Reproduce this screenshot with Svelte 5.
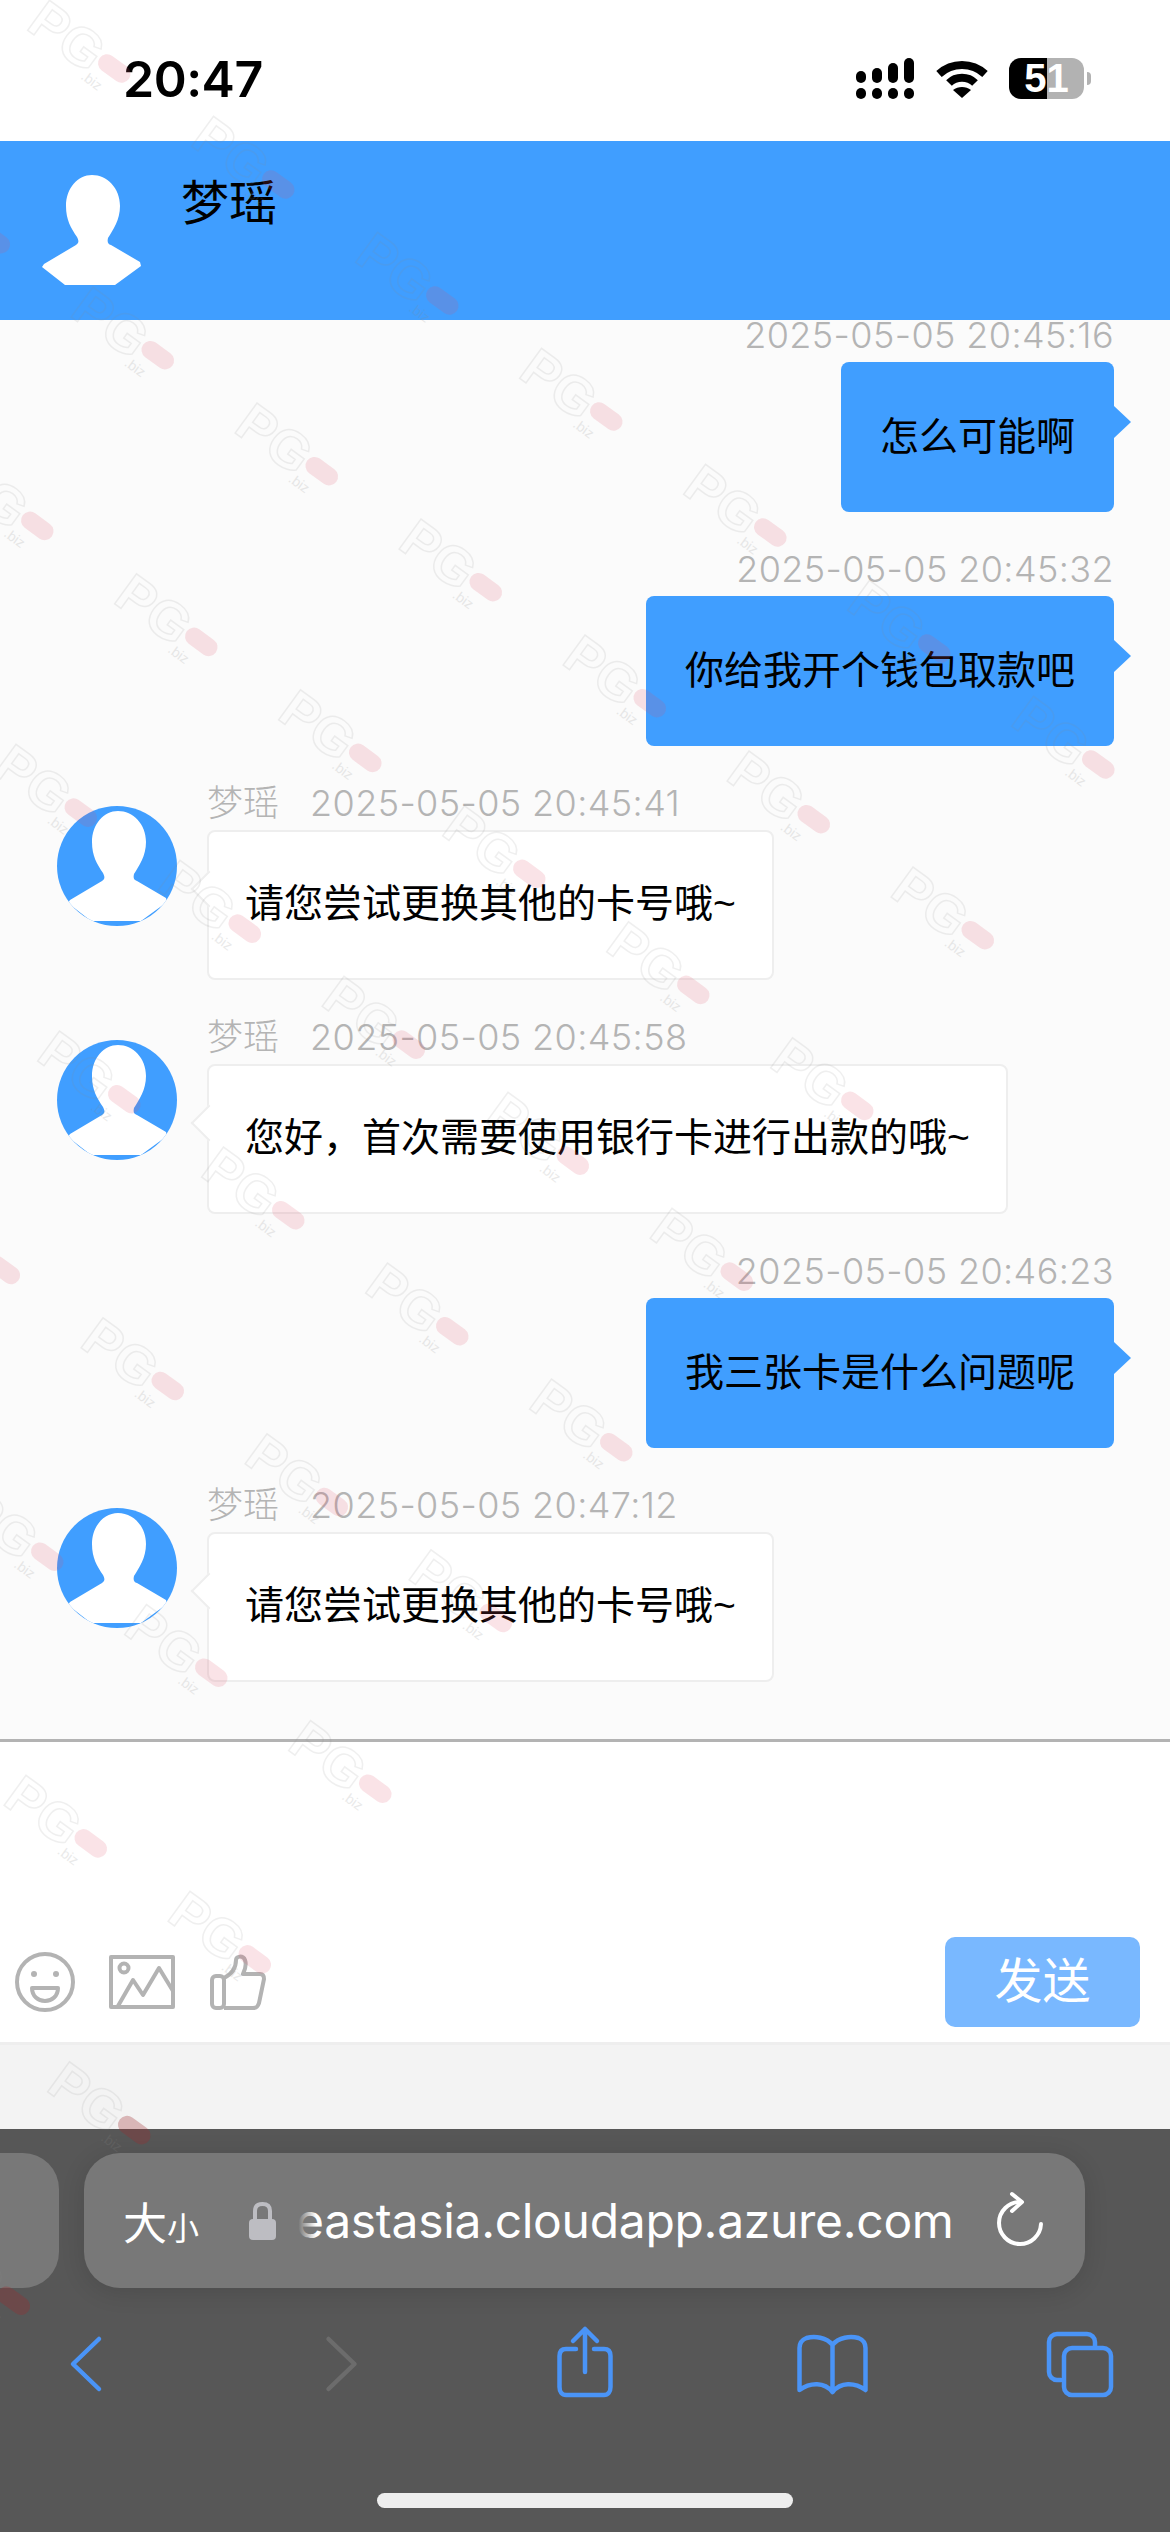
<script>
  const messages = [
    { mine: true, time: '2025-05-05 20:45:16', text: '怎么可能啊' },
    { mine: true, time: '2025-05-05 20:45:32', text: '你给我开个钱包取款吧' },
    { mine: false, time: '2025-05-05 20:45:41', text: '请您尝试更换其他的卡号哦~' },
    { mine: false, time: '2025-05-05 20:45:58', text: '您好，首次需要使用银行卡进行出款的哦~' },
    { mine: true, time: '2025-05-05 20:46:23', text: '我三张卡是什么问题呢' },
    { mine: false, time: '2025-05-05 20:47:12', text: '请您尝试更换其他的卡号哦~' }
  ];

  const figure =
    'M61 5C76 5 89 18 89 36C89 50 82 60 77 68C76 72 77 74 80 75L109 92L110 96L84 115H34L11 97L13 94L45 75C48 73 48 71 46 67C40 58 35 50 35 36C35 18 47 5 61 5Z';

  const signal = [
    { x: 856, y: 70 },
    { x: 872, y: 67 },
    { x: 888, y: 62 },
    { x: 904, y: 57 }
  ];

  //watermark sits on a regular lattice, cut off on its upper right side
  const marks = [];
  for (let n = -12; n <= 6; n++) {
    for (let m = 0; m <= 9; m++) {
      const x = 80 + n * 164 + m * -120.5;
      const y = 51 + n * 116 + m * 170.7;
      if (x > -70 && x < 1240 && y > -60 && y < 2400) marks.push({ x, y });
    }
  }
</script>

{#snippet person()}
  <svg class="person" viewBox="0 0 120 120"><path d={figure} fill="#fff" /></svg>
{/snippet}

<div class="page">
  <div class="status">
    <span class="clock">20:47</span>
    <div class="status-icons">
      <svg class="signal" viewBox="856 57 58 41">
        {#each signal as bar}
          <rect x={bar.x} y={bar.y} width="10" height={82 - bar.y} rx="5" />
          <rect x={bar.x} y="87" width="10" height="11" rx="5" />
        {/each}
      </svg>
      <svg class="wifi" viewBox="0 0 52 40">
        <path d="M3 15C16 3 36 3 49 15" />
        <path d="M13 24C20 17 32 17 39 24" />
        <path class="dot" d="M26 39L17 31C22 27 30 27 35 31Z" />
      </svg>
      <div class="battery"><span>51</span></div>
      <div class="nub"></div>
    </div>
  </div>

  <div class="header">
    <div class="header-avatar">{@render person()}</div>
    <div class="header-name">梦瑶</div>
  </div>

  <div class="chat">
    {#each messages as msg}
      {#if msg.mine}
        <div class="msg mine">
          <div class="meta">{msg.time}</div>
          <div class="bubble">{msg.text}</div>
        </div>
      {:else}
        <div class="msg theirs">
          <div class="avatar">{@render person()}</div>
          <div class="body">
            <div class="meta"><span class="who">梦瑶</span>{msg.time}</div>
            <div class="bubble">{msg.text}</div>
          </div>
        </div>
      {/if}
    {/each}
  </div>

  <div class="input">
    <div class="tools">
      <svg class="smile" viewBox="0 0 60 60">
        <circle cx="30" cy="30" r="28" />
        <circle class="solid" cx="19" cy="22" r="3" />
        <circle class="solid" cx="41" cy="22" r="3" />
        <path d="M17 36H43C43 44 37 49 30 49C23 49 17 44 17 36Z" />
      </svg>
      <svg class="picture" viewBox="0 0 66 54">
        <rect x="2" y="2" width="62" height="50" />
        <circle cx="15" cy="13" r="4.5" />
        <path d="M9 51L24 25L34 40L50 13L64 36" />
      </svg>
      <svg class="thumb" viewBox="0 0 56 56">
        <rect x="2" y="22" width="12" height="32" rx="4" />
        <path d="M14 24C22 20 26 14 26 6C26 2 33 1 35 6C37 12 34 18 33 20H50C53 20 54 22 54 25L49 49C48 52 47 54 43 54H14" />
      </svg>
    </div>
    <div class="send">发送</div>
  </div>

  <div class="gray"></div>

  <div class="browser">
    <div class="url-row">
      <div class="tab-peek"></div>
      <div class="url-bar">
        <span class="aa">大<small>小</small></span>
        <svg class="lock" viewBox="0 0 27 38">
          <path d="M6 18V9C6 4 9 2 13.500 2C18 2 21 4 21 9V18" />
          <rect class="solid" x="0" y="17" width="27" height="21" rx="4" />
        </svg>
        <span class="domain">eastasia.cloudapp.azure.com</span>
        <svg class="reload" viewBox="995 2190 50 60">
          <path d="M1019 2201A21 21 0 1 0 1040 2223" />
          <path d="M1011 2193L1021 2201L1011 2210" />
        </svg>
      </div>
    </div>
    <div class="toolbar">
      <svg viewBox="41 2324 90 80"><path d="M99 2339L73 2364L99 2389" /></svg>
      <svg class="off" viewBox="289.500 2324 90 80"><path d="M328 2339L354 2364L328 2389" /></svg>
      <svg viewBox="538 2324 90 80">
        <path d="M585 2372V2329M573 2341L585 2329L597 2341" />
        <path d="M576 2349H566C562 2349 559.500 2351 559.500 2356V2387C559.500 2392 562 2395 566 2395H604C608 2395 610.500 2392 610.500 2387V2356C610.500 2351 608 2349 604 2349H594" />
      </svg>
      <svg viewBox="786.500 2324 90 80">
        <path d="M832 2345C826 2337 814 2336 806 2338C801 2340 799 2344 799 2348V2390C810 2382 824 2382 832 2392C840 2382 854 2382 865 2390V2348C865 2344 863 2340 858 2338C850 2336 838 2337 832 2345V2392" />
      </svg>
      <svg viewBox="1035 2324 90 80">
        <path d="M1061 2380H1057A8 8 0 0 1 1049 2372V2342A8 8 0 0 1 1057 2334H1087A8 8 0 0 1 1095 2342V2347" />
        <rect x="1064" y="2348" width="47" height="47" rx="8" />
      </svg>
    </div>
    <div class="home"></div>
  </div>

  <svg class="watermark" viewBox="0 0 1170 2532">
    {#each marks as mark}
      <g transform="translate({mark.x} {mark.y}) rotate(36)">
        <text class="wm-text" x="-58" y="14">PG</text>
        <text class="wm-small" x="16" y="22">.biz</text>
        <rect class="wm-pill" class:deep={mark.y > 2050} x="20" y="-15" width="36" height="18" rx="9" />
      </g>
    {/each}
  </svg>
</div>

<style>
  :global(body) {
    margin: 0;
    background: #fff;
  }

  .page {
    position: relative;
    width: 1170px;
    height: 2532px;
    overflow: hidden;
    display: flex;
    flex-direction: column;
    font-family: "Liberation Sans", "Noto Sans CJK SC", sans-serif;
    color: #000;
  }

  .status {
    height: 141px;
    flex: none;
    display: flex;
    align-items: center;
    justify-content: space-between;
    padding: 16px 79px 0 123px;
    box-sizing: border-box;
    background: #fff;
  }

  .clock {
    font-family: Inter, sans-serif;
    font-weight: 600;
    font-size: 50px;
    letter-spacing: -0.5px;
  }

  .status-icons {
    display: flex;
    align-items: center;
  }

  .signal {
    width: 58px;
    height: 41px;
    margin-right: 22px;
  }

  .wifi {
    width: 52px;
    height: 40px;
    margin-right: 21px;
  }

  .wifi path {
    fill: none;
    stroke: #000;
    stroke-width: 8;
  }

  .wifi .dot {
    fill: #000;
    stroke: none;
  }

  .battery {
    width: 75px;
    height: 41px;
    border-radius: 12px;
    background: linear-gradient(to right, #000 51%, #b2b2b2 51%);
    color: #fff;
    font-weight: 700;
    font-size: 40px;
    line-height: 41px;
    text-align: center;
  }

  .nub {
    width: 4px;
    height: 13px;
    margin-left: 3px;
    border-radius: 0 4px 4px 0;
    background: #b2b2b2;
  }

  .header {
    height: 179px;
    flex: none;
    display: flex;
    background: #409eff;
  }

  .header-avatar {
    width: 120px;
    height: 120px;
    margin: 29px 0 0 31px;
  }

  .person {
    display: block;
    width: 100%;
    height: 100%;
  }

  .header-name {
    margin: 33px 0 0 30px;
    font-size: 48px;
    line-height: 60px;
  }

  .chat {
    height: 1419px;
    flex: none;
    overflow: hidden;
    background: #fbfbfb;
  }

  .msg {
    height: 234px;
    box-sizing: border-box;
  }

  .meta {
    height: 42px;
    font-family: Inter, "Noto Sans CJK SC", sans-serif;
    font-weight: 300;
    font-size: 36px;
    letter-spacing: 0.4px;
    line-height: 30px;
    color: #b4b4b4;
    white-space: nowrap;
  }

  .who {
    margin-right: 31px;
    font-family: "Noto Sans CJK SC", sans-serif;
    letter-spacing: 0;
    line-height: 1px;
  }

  .bubble {
    position: relative;
    height: 150px;
    box-sizing: border-box;
    padding: 0 39px;
    border-radius: 8px;
    font-size: 39px;
    line-height: 144px;
    white-space: nowrap;
  }

  .mine {
    display: flex;
    flex-direction: column;
    align-items: flex-end;
    padding-right: 56px;
  }

  .mine .bubble {
    background: #409eff;
    line-height: 150px;
  }

  .mine .bubble::after {
    content: "";
    position: absolute;
    right: -17px;
    top: 44px;
    border-left: 17px solid #409eff;
    border-top: 16px solid transparent;
    border-bottom: 16px solid transparent;
  }

  .theirs {
    display: flex;
    padding-left: 57px;
  }

  .avatar {
    width: 120px;
    height: 120px;
    margin: 18px 30px 0 0;
    flex: none;
    border-radius: 50%;
    overflow: hidden;
    background: #409eff;
  }

  .theirs .bubble {
    width: fit-content;
    padding: 0 36px;
    background: #fff;
    border: 2px solid #eee;
  }

  .theirs .bubble::before {
    content: "";
    position: absolute;
    left: -13px;
    top: 44px;
    width: 24px;
    height: 24px;
    background: #fff;
    border-left: 2px solid #eee;
    border-bottom: 2px solid #eee;
    transform: rotate(45deg);
  }

  .input {
    height: 306px;
    flex: none;
    box-sizing: border-box;
    display: flex;
    align-items: flex-end;
    justify-content: space-between;
    padding: 0 30px 15px 15px;
    background: #fff;
    border-top: 3px solid #b3b3b3;
    border-bottom: 3px solid #eee;
  }

  .tools {
    display: flex;
    align-items: center;
    height: 90px;
  }

  .tools svg {
    fill: none;
    stroke: #b3b3b3;
    stroke-width: 4;
    stroke-linejoin: round;
  }

  .tools .solid {
    fill: #b3b3b3;
    stroke: none;
  }

  .smile {
    width: 60px;
    height: 60px;
    margin-right: 34px;
  }

  .picture {
    width: 66px;
    height: 54px;
    margin-right: 35px;
  }

  .thumb {
    width: 56px;
    height: 56px;
  }

  .send {
    width: 195px;
    height: 90px;
    border-radius: 10px;
    background: #79b8ff;
    color: #fff;
    font-size: 48px;
    line-height: 90px;
    text-align: center;
  }

  .gray {
    height: 84px;
    flex: none;
    background: #f3f3f3;
  }

  .browser {
    flex: 1;
    background: #575757;
  }

  .url-row {
    display: flex;
    gap: 25px;
    padding-top: 24px;
  }

  .tab-peek {
    width: 59px;
    height: 135px;
    border-radius: 0 36px 36px 0;
    background: #787878;
  }

  .url-bar {
    width: 1001px;
    height: 135px;
    box-sizing: border-box;
    display: flex;
    align-items: center;
    padding: 0 39px 0 39px;
    border-radius: 36px;
    background: #787878;
    box-shadow: 0 4px 24px rgba(0, 0, 0, 0.12);
    color: #fff;
  }

  .aa {
    font-size: 44px;
    width: 126px;
    flex: none;
  }

  .aa small {
    font-size: 32px;
  }

  .lock {
    width: 27px;
    height: 38px;
    flex: none;
    margin-right: -4px;
    position: relative;
    z-index: 1;
  }

  .lock path {
    fill: none;
    stroke: #bdbdc2;
    stroke-width: 4;
  }

  .lock .solid {
    fill: #bdbdc2;
  }

  .domain {
    position: relative;
    flex: 1;
    padding-left: 24px;
    font-family: Inter, "Liberation Sans", sans-serif;
    font-size: 48px;
    letter-spacing: -0.3px;
    white-space: nowrap;
  }

  .domain::before {
    content: "";
    position: absolute;
    left: 0;
    top: 0;
    bottom: 0;
    width: 44px;
    background: linear-gradient(to right, #787878 60%, rgba(120, 120, 120, 0));
  }

  .reload {
    width: 50px;
    height: 60px;
    flex: none;
    fill: none;
    stroke: #fff;
    stroke-width: 4;
    stroke-linecap: round;
    stroke-linejoin: round;
  }

  .toolbar {
    display: flex;
    justify-content: space-between;
    padding: 36px 45px 0 41px;
  }

  .toolbar svg {
    width: 90px;
    height: 80px;
    fill: none;
    stroke: #4a94f7;
    stroke-width: 4.500;
    stroke-linecap: round;
    stroke-linejoin: round;
  }

  .toolbar .off {
    stroke: #6c6c6c;
  }

  .home {
    width: 416px;
    height: 15px;
    margin: 89px auto 0;
    border-radius: 8px;
    background: #eee;
  }

  .watermark {
    position: absolute;
    left: 0;
    top: 0;
    width: 1170px;
    height: 2532px;
    pointer-events: none;
  }

  .wm-text {
    font-family: "Liberation Sans", sans-serif;
    font-size: 54px;
    font-weight: 700;
    fill: none;
    stroke: #8a8a8a;
    stroke-width: 1.500;
    opacity: 0.13;
  }

  .wm-small {
    font-family: "Liberation Sans", sans-serif;
    font-size: 14px;
    fill: #8a8a8a;
    opacity: 0.18;
  }

  .wm-pill {
    fill: #e2526b;
    opacity: 0.16;
  }

  .wm-pill.deep {
    fill: #a02a30;
    opacity: 0.3;
  }
</style>
